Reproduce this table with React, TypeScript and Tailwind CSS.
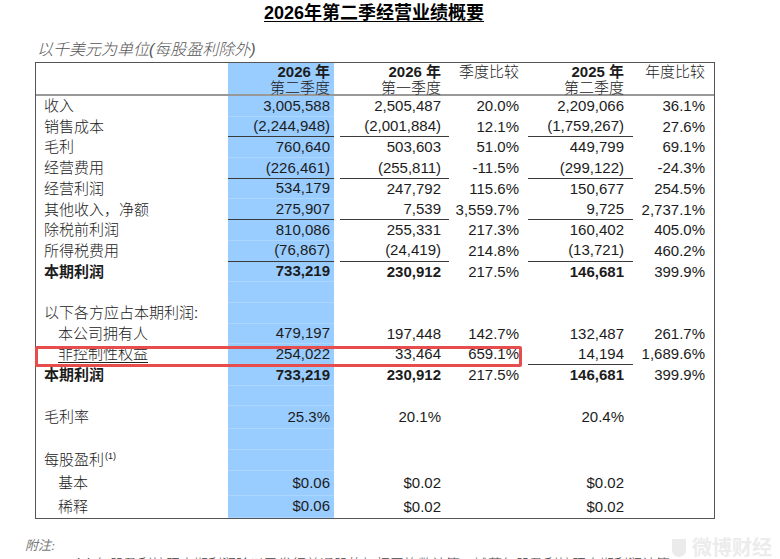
import React from "react";

type R = {
  label?: string;
  indent?: boolean;
  bold?: boolean;
  v?: string[];
  line?: boolean;
  h: string;
  sup?: boolean;
  ul?: boolean;
};

const H = "h-[20.7px]";

const rows: R[] = [
  { label: "收入", v: ["3,005,588", "2,505,487", "20.0%", "2,209,066", "36.1%"], h: H },
  { label: "销售成本", v: ["(2,244,948)", "(2,001,884)", "12.1%", "(1,759,267)", "27.6%"], line: true, h: H },
  { label: "毛利", v: ["760,640", "503,603", "51.0%", "449,799", "69.1%"], h: H },
  { label: "经营费用", v: ["(226,461)", "(255,811)", "-11.5%", "(299,122)", "-24.3%"], line: true, h: H },
  { label: "经营利润", v: ["534,179", "247,792", "115.6%", "150,677", "254.5%"], h: H },
  { label: "其他收入，净额", v: ["275,907", "7,539", "3,559.7%", "9,725", "2,737.1%"], line: true, h: H },
  { label: "除税前利润", v: ["810,086", "255,331", "217.3%", "160,402", "405.0%"], h: H },
  { label: "所得税费用", v: ["(76,867)", "(24,419)", "214.8%", "(13,721)", "460.2%"], line: true, h: H },
  { label: "本期利润", bold: true, v: ["733,219", "230,912", "217.5%", "146,681", "399.9%"], h: H },
  { h: H },
  { label: "以下各方应占本期利润:", h: H },
  { label: "本公司拥有人", indent: true, v: ["479,197", "197,448", "142.7%", "132,487", "261.7%"], h: H },
  { label: "非控制性权益", indent: true, ul: true, v: ["254,022", "33,464", "659.1%", "14,194", "1,689.6%"], line: true, h: H },
  { label: "本期利润", bold: true, v: ["733,219", "230,912", "217.5%", "146,681", "399.9%"], h: H },
  { h: H },
  { label: "毛利率", v: ["25.3%", "20.1%", "", "20.4%", ""], h: "h-[22.5px]" },
  { h: "h-[21px]" },
  { label: "每股盈利", sup: true, h: "h-[21px]" },
  { label: "基本", indent: true, v: ["$0.06", "$0.02", "", "$0.02", ""], h: "h-[25px]" },
  { label: "稀释", indent: true, v: ["$0.06", "$0.02", "", "$0.02", ""], h: "h-[22px]" },
];

export default function App() {
  return (
    <div className="relative h-[559px] w-[780px] overflow-hidden bg-white font-['Liberation_Sans','Noto_Sans_CJK_SC',sans-serif] text-[#1c1c1c]">
      {/* Title */}
      <div className="flex justify-center pr-[32px] pt-[2px]">
        <span className="text-[18px] font-bold leading-[22px] text-black underline underline-offset-[2px]">
          2026年第二季经营业绩概要
        </span>
      </div>

      {/* Subtitle */}
      <div className="mt-[17px] pl-[37px] text-[16px] font-light italic leading-[18px] text-[#555]">
        以千美元为单位(每股盈利除外)
      </div>

      {/* Table */}
      <div className="relative ml-[35px] mt-[3px] w-[680px] border border-[#555]">
        {/* header */}
        <div className="flex h-[33px] border-b-2 border-[#999] text-[15px] leading-[15.5px]">
          <div className="w-[192px]" />
          <div className="w-[106px] bg-[#99ccff] pr-[4px] pt-[1px] text-right">
            <div className="font-bold">2026 年</div>
            <div className="font-light text-[#222]">第二季度</div>
          </div>
          <div className="ml-[6px] w-[109px] pr-[8px] pt-[1px] text-right">
            <div className="font-bold">2026 年</div>
            <div className="font-light text-[#222]">第一季度</div>
          </div>
          <div className="w-[79px] pr-[9px] pt-[1px] text-right">
            <div className="font-light text-[#222]">季度比较</div>
          </div>
          <div className="w-[105px] pr-[9px] pt-[1px] text-right">
            <div className="font-bold">2025 年</div>
            <div className="font-light text-[#222]">第二季度</div>
          </div>
          <div className="w-[80px] pr-[8px] pt-[1px] text-right">
            <div className="font-light text-[#222]">年度比较</div>
          </div>
        </div>

        {/* rows */}
        {rows.map((r, i) => {
          const v = r.v ?? ["", "", "", "", ""];
          const ln = r.line ? "border-b border-[#3a3a3a]" : "";
          return (
            <div key={i} className={`flex ${r.h} items-stretch text-[15px]`}>
              <div
                className={`flex w-[192px] items-center ${r.indent ? "pl-[22px]" : "pl-[8px]"} ${r.bold ? "font-bold" : "font-light text-[#222]"}`}
              >
                <span className={r.ul ? "underline underline-offset-[3px]" : ""}>{r.label}</span>
                {r.sup && <span className="ml-[1px] -translate-y-[4px] text-[9px]">(1)</span>}
              </div>
              <div
                className={`flex w-[106px] items-center justify-end bg-[#99ccff] pr-[4px] ${r.line ? "border-b border-[#3a3a3a]" : "border-b border-[#acd5ff]"} ${r.bold ? "font-bold" : ""}`}
              >
                {v[0]}
              </div>
              <div className={`ml-[6px] flex w-[109px] items-center justify-end pr-[8px] ${ln} ${r.bold ? "font-bold" : ""}`}>
                {v[1]}
              </div>
              <div className="flex w-[79px] items-center justify-end pr-[9px]">{v[2]}</div>
              <div className={`flex w-[105px] items-center justify-end pr-[9px] ${ln} ${r.bold ? "font-bold" : ""}`}>
                {v[3]}
              </div>
              <div className="flex w-[80px] items-center justify-end pr-[8px]">{v[4]}</div>
            </div>
          );
        })}

        {/* red highlight */}
        <div className="absolute left-[-1px] top-[283px] h-[21px] w-[487px] rounded-[2px] border-[3px] border-[#e84d4d]" />
      </div>

      {/* notes */}
      <div className="mt-[19px] pl-[25px] font-['Liberation_Serif','Noto_Sans_CJK_SC',serif] text-[13px] italic leading-[16px] text-[#777]">
        附注:
      </div>
      <div className="mt-[2px] pl-[75px] text-[14px] font-light leading-[16px] text-[#444]">
        (1) 每股盈利按照本期利润除以已发行普通股的加权平均数计算，摊薄每股盈利按照本期利润计算
      </div>

      {/* watermark */}
      <div className="absolute left-[672px] top-[533px] flex items-center gap-[6px] text-[20px] font-bold text-[#ececec]">
        <span className="h-[18px] w-[14px] rounded-b-[7px] bg-[#ebebeb]" />
        <span>微博财经</span>
      </div>
    </div>
  );
}
